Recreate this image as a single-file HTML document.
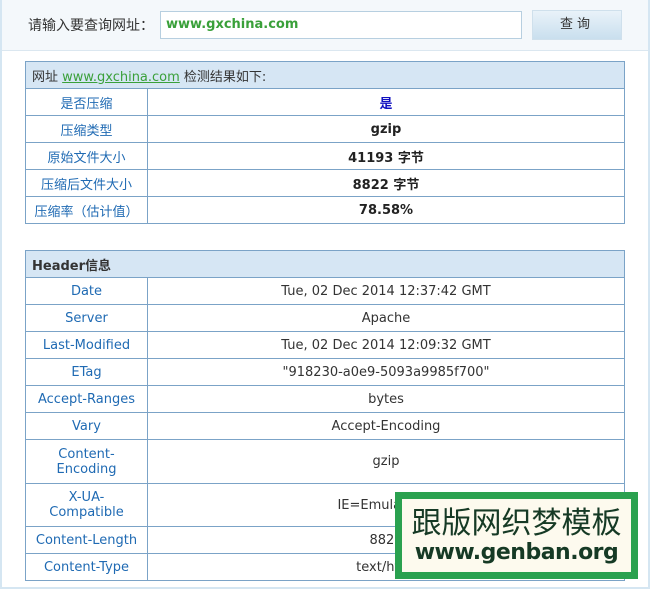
<!DOCTYPE html><html><head><meta charset="utf-8"><style>
*{box-sizing:border-box;margin:0;padding:0}
body{width:650px;height:589px;background:#fff;font-family:"DejaVu Sans","Noto Sans CJK SC",sans-serif;font-size:13px;color:#333;position:relative;overflow:hidden}
.fr{position:absolute;left:0;top:0;width:650px;height:589px;border-left:2px solid #d5e6f2;border-right:2px solid #d5e6f2;border-bottom:2px solid #d5e6f2}
.top{position:absolute;left:0;top:0;width:650px;height:51px;background:#f4f8fb;border-bottom:1px solid #dbe7f0}
.lbl{position:absolute;left:28px;top:15px;font-size:14px;color:#333}
.inp{position:absolute;left:160px;top:11px;width:362px;height:28px;border:1px solid #b7cfe0;background:#fff;color:#3aa03a;font-weight:bold;font-size:13px;line-height:26px;padding-left:5px}
.btn{position:absolute;left:532px;top:10px;width:90px;height:30px;background:linear-gradient(#e9f2f9,#c9dfee);border:1px solid #cfe0ec;text-align:center;line-height:28px;font-size:13px;letter-spacing:4px}
table{position:absolute;left:25px;width:600px;border-collapse:collapse}
td{border:1px solid #7ba3c7;text-align:center;height:27px}
td.k{width:122px;color:#1f6ab3}
th{background:#d6e6f4;border:1px solid #7ba3c7;text-align:left;height:27px;font-weight:normal;padding-left:6px}
.t1 td.v{font-weight:bold;color:#222}
.wm{position:absolute;left:395px;top:492px;width:243px;height:87px;background:#2aa14f;padding:5px}
.wi{width:100%;height:100%;background:#fdfaee;border:2px solid #2aa14f;text-align:center;color:#163a25}
.wi .a{font-size:30px;line-height:38px;font-family:"Noto Sans CJK SC",sans-serif;margin-top:2px}
.wi .b{font-size:22px;font-weight:bold;line-height:28px;font-family:"DejaVu Sans",sans-serif;letter-spacing:-0.5px}
</style></head><body>
<div class="top"><div class="lbl">请输入要查询网址：</div><div class="inp">www.gxchina.com</div><div class="btn">查询</div></div>
<table class="t1" style="top:61px">
<tr><th colspan="2">网址 <span style="color:#3aa03a;text-decoration:underline">www.gxchina.com</span> 检测结果如下:</th></tr>
<tr><td class="k">是否压缩</td><td class="v" style="color:#1010c0">是</td></tr>
<tr><td class="k">压缩类型</td><td class="v">gzip</td></tr>
<tr><td class="k">原始文件大小</td><td class="v">41193 字节</td></tr>
<tr><td class="k">压缩后文件大小</td><td class="v">8822 字节</td></tr>
<tr><td class="k">压缩率（估计值）</td><td class="v">78.58%</td></tr>
</table>
<table style="top:250px">
<tr><th colspan="2" style="font-weight:bold">Header信息</th></tr>
<tr><td class="k">Date</td><td>Tue, 02 Dec 2014 12:37:42 GMT</td></tr>
<tr><td class="k">Server</td><td>Apache</td></tr>
<tr><td class="k">Last-Modified</td><td>Tue, 02 Dec 2014 12:09:32 GMT</td></tr>
<tr><td class="k">ETag</td><td>"918230-a0e9-5093a9985f700"</td></tr>
<tr><td class="k">Accept-Ranges</td><td>bytes</td></tr>
<tr><td class="k">Vary</td><td>Accept-Encoding</td></tr>
<tr><td class="k" style="height:44px">Content-<br>Encoding</td><td>gzip</td></tr>
<tr><td class="k" style="height:43px">X-UA-<br>Compatible</td><td>IE=EmulateIE7</td></tr>
<tr><td class="k">Content-Length</td><td>8822</td></tr>
<tr><td class="k">Content-Type</td><td>text/html</td></tr>
</table>
<div class="fr"></div>
<div class="wm"><div class="wi"><div class="a">跟版网织梦模板</div><div class="b">www.genban.org</div></div></div>
</body></html>
